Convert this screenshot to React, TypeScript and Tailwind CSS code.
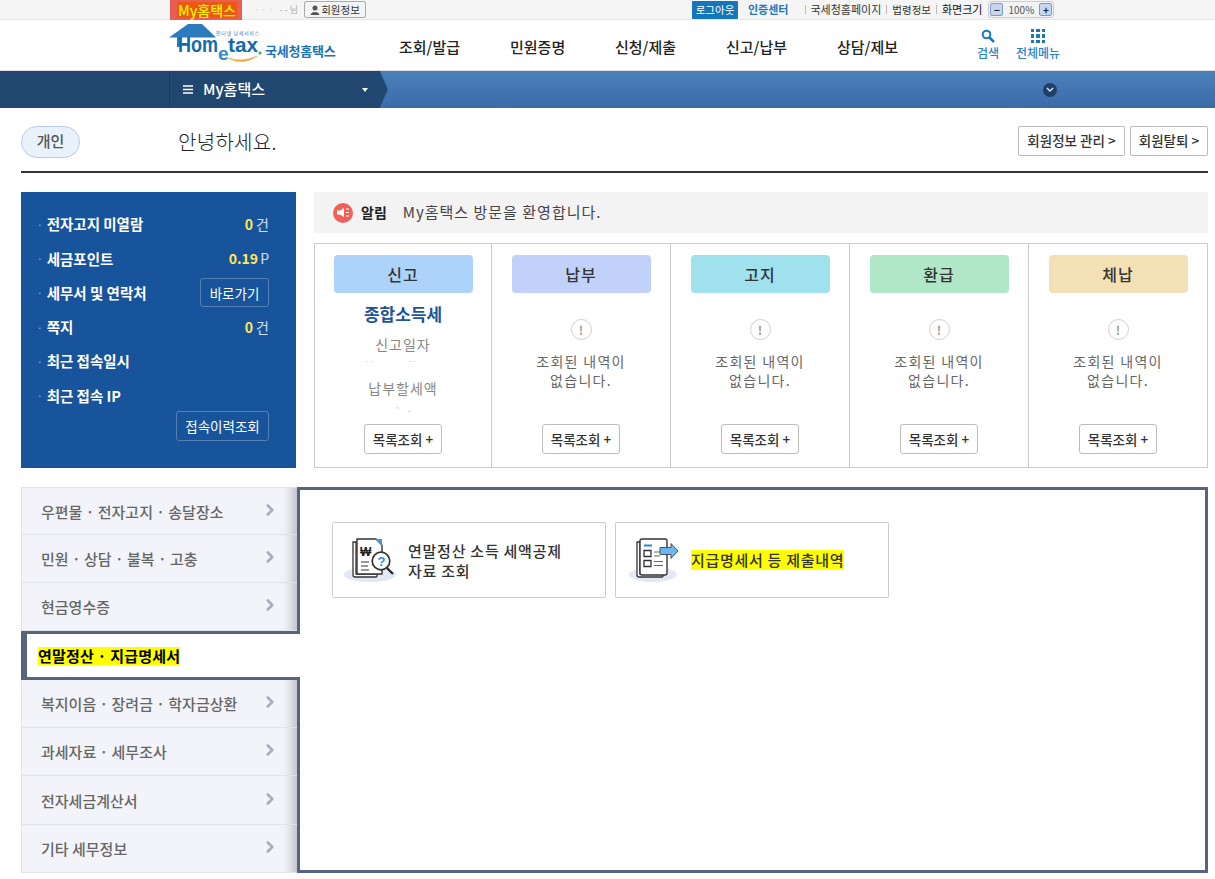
import React from "react";
import { ChevronRight } from "lucide-react";

const font = "font-['Noto_Sans_CJK_KR','Noto_Sans',sans-serif]";

function Sep() {
  return <span className="mx-[5px] inline-block h-[9px] w-px bg-[#bbbbbb]" />;
}

function Logo() {
  return (
    <svg width="100" height="44" viewBox="0 0 100 44" className="shrink-0">
      <path d="M0 14.500 L19 1 H33 L47 14.500 H22 H11 V24 H8 V14.500 Z" fill="#2b7bbd" />
      <text x="9" y="29" fontFamily="'Liberation Sans',sans-serif" fontWeight="700" fontSize="22" fill="#156aa9" textLength="40" lengthAdjust="spacingAndGlyphs">Hom</text>
      <text x="49" y="37" fontFamily="'Liberation Sans',sans-serif" fontWeight="700" fontSize="19" fill="#2d8ccb">e</text>
      <text x="59" y="29" fontFamily="'Liberation Sans',sans-serif" fontWeight="700" fontSize="20" fill="#156aa9" textLength="30" lengthAdjust="spacingAndGlyphs">tax</text>
      <circle cx="91" cy="30" r="1.500" fill="#3fae49" />
      <path d="M59 35 Q74 43 88 33 Q74 40 59 35 Z" fill="#f2a83b" stroke="#f2a83b" strokeWidth="0.600" />
      <text x="47" y="12" fontFamily="'Noto Sans CJK KR',sans-serif" fontSize="5" fill="#2a7cc0" textLength="43">인터넷 납세서비스</text>
    </svg>
  );
}

function Card1Icon() {
  return (
    <svg width="54" height="48" viewBox="0 0 54 48" className="shrink-0">
      <ellipse cx="27" cy="38.500" rx="26.500" ry="7.500" fill="#e2e9f5" />
      <path d="M10 6 H13 V38 H34 V40 a1 1 0 0 1 -1 1 H12 a2 2 0 0 1 -2 -2 Z" fill="#fff" stroke="#333" strokeWidth="1.300" />
      <path d="M14 3 H33 L39 9 V38 H14 Z" fill="#fff" stroke="#333" strokeWidth="1.400" />
      <path d="M32 3 L39 10 V3 Z" fill="#4d93d6" />
      <text x="17" y="20" fontFamily="'Liberation Sans',sans-serif" fontWeight="700" fontSize="12" fill="#222">₩</text>
      <path d="M18 26 h8 M18 30 h7 M18 34 h8" stroke="#777" strokeWidth="1.300" />
      <circle cx="38" cy="25" r="8.800" fill="#fff" stroke="#333" strokeWidth="1.700" />
      <text x="34.500" y="30" fontFamily="'Liberation Sans',sans-serif" fontWeight="700" fontSize="13" fill="#2f8fe0">?</text>
      <path d="M44 32 L50 38" stroke="#222" strokeWidth="2.200" />
    </svg>
  );
}

function Card2Icon() {
  return (
    <svg width="54" height="48" viewBox="0 0 54 48" className="shrink-0">
      <ellipse cx="25" cy="38.500" rx="24" ry="7.500" fill="#e2e9f5" />
      <path d="M9 6 H12 V38 H35 V40 a1 1 0 0 1 -1 1 H11 a2 2 0 0 1 -2 -2 Z" fill="#fff" stroke="#333" strokeWidth="1.300" />
      <rect x="12" y="3" width="27" height="36" rx="2" fill="#fff" stroke="#333" strokeWidth="1.400" />
      <path d="M16 9.500 h8" stroke="#2d86c9" strokeWidth="2" />
      <path d="M16 14.500 h7 v6 h-7 Z M16 24.500 h7 v6 h-7 Z" fill="none" stroke="#333" strokeWidth="1.300" />
      <path d="M26 16 h6 M26 20 h6 M26 25.500 h9 M26 29.500 h9" stroke="#666" strokeWidth="1.200" />
      <path d="M32 11.500 h11 v-4 l7 7.500 -7 7.500 v-4 h-11 Z" fill="#6ab7f2" stroke="#333" strokeWidth="0.800" />
    </svg>
  );
}

function Column({ title, color, children }: { title: string; color: string; children?: React.ReactNode }) {
  return (
    <div className="flex h-full min-w-0 flex-col items-center border-l border-[#cccccc] first:border-l-0">
      <div className={`mt-[11px] flex h-[38px] w-[139px] items-center justify-center rounded-[4px] text-[16px] font-medium tracking-[1px] text-[#333333] ${color}`}>
        {title}
      </div>
      {children ?? (
        <>
          <div className="mt-[26px] flex h-[21px] w-[21px] items-center justify-center rounded-full border border-[#cfcfcf] text-[12px] font-bold leading-none text-[#999999]">!</div>
          <div className="mt-[12px] text-center text-[14px] leading-[19px] tracking-[1.300px] text-[#666666]">
            조회된 내역이
            <br />
            없습니다.
          </div>
        </>
      )}
      <button className="mb-[13px] mt-auto flex h-[30px] w-[78px] items-center justify-center rounded-[3px] border border-[#bbbbbb] bg-white text-[13.500px] font-medium text-[#333333]">
        목록조회 +
      </button>
    </div>
  );
}

function InfoRow({ label, children }: { label: string; children?: React.ReactNode }) {
  return (
    <div className="flex h-[34.300px] items-center justify-between">
      <div className="flex items-center text-[14.500px] font-semibold text-white">
        <span className="mr-[4px] text-[10px] font-normal text-[#9db9da]">·</span>
        {label}
      </div>
      {children}
    </div>
  );
}

const menu = [
  { t: "우편물 · 전자고지 · 송달장소", h: "h-[48px]" },
  { t: "민원 · 상담 · 불복 · 고충", h: "h-[48px]" },
  { t: "현금영수증", h: "h-[48px]" },
  { t: "연말정산 · 지급명세서", h: "h-[49px]" },
  { t: "복지이음 · 장려금 · 학자금상환", h: "h-[48px]" },
  { t: "과세자료 · 세무조사", h: "h-[48px]" },
  { t: "전자세금계산서", h: "h-[49px]" },
  { t: "기타 세무정보", h: "h-[48px]" },
];

export default function App() {
  return (
    <div className={`${font} h-[879px] w-[1215px] overflow-hidden bg-white text-[#333333]`}>
      {/* utility bar */}
      <div className="flex h-[20px] items-center border-b border-[#e6e6e6] bg-[#f5f5f5] pl-[170px] text-[11px] text-[#333333]">
        <div className="flex h-[21px] w-[72px] items-center justify-center bg-[#ea5d55] pl-[2px]">
          <span className="bg-[#e85a10] px-[1px] text-[14px] font-medium leading-[16px] text-[#ffee00]">My홈택스</span>
        </div>
        <span className="ml-[12px] flex w-[44px] items-center justify-between text-[9px] leading-none text-[#cfcfcf]">
          <span>· · ·</span>
          <span className="text-[#aaaaaa]">- - 님</span>
        </span>
        <button className="ml-[6px] flex h-[17px] w-[62px] items-center justify-center rounded-[2px] border border-[#aaaaaa] bg-[#f4f4f4] text-[10.500px] text-[#333333]">
          <svg width="10" height="10" viewBox="0 0 10 10" className="mr-[1px]">
            <circle cx="5" cy="3" r="2.500" fill="#555555" />
            <path d="M0.500 10 C1 6 9 6 9.500 10 Z" fill="#555555" />
          </svg>
          회원정보
        </button>
        <button className="ml-[326px] flex h-[18px] w-[46px] items-center justify-center rounded-[1px] bg-[#1277bb] text-[10.500px] text-white">로그아웃</button>
        <span className="ml-[10px] text-[11px] font-bold text-[#1b78bf]">인증센터</span>
        <span className="ml-[17px]"><span className="inline-block h-[9px] w-px bg-[#bbbbbb]" /></span>
        <span className="ml-[4px] text-[11px]">국세청홈페이지</span>
        <Sep />
        <span className="text-[10.500px]">법령정보</span>
        <Sep />
        <span className="text-[11px] text-[#111111]">화면크기</span>
        <div className="ml-[6px] flex h-[17px] w-[66px] items-center justify-between rounded-[3px] border border-[#c8ccd4] bg-[#f2f3f5] px-[1px] text-[10px] text-[#555555]">
          <span className="flex h-[13px] w-[13px] items-center justify-center rounded-[2px] border border-[#7f9ac0] bg-[#c7d7ee] text-[10px] font-bold leading-none text-[#223]">−</span>
          100%
          <span className="flex h-[13px] w-[13px] items-center justify-center rounded-[2px] border border-[#7f9ac0] bg-[#c7d7ee] text-[10px] font-bold leading-none text-[#223]">+</span>
        </div>
      </div>

      {/* header */}
      <div className="flex h-[51px] items-center border-b border-[#dddddd] pl-[169px]">
        <Logo />
        <span className="ml-[-4px] mt-[11px] w-[72px] whitespace-nowrap text-[13px] font-semibold tracking-[-0.200px] text-[#1b74b8]">국세청홈택스</span>
        <nav className="ml-[62px] mt-[4px] flex text-[15px] font-medium text-[#222222]">
          <a className="w-[111px]">조회/발급</a>
          <a className="w-[105px]">민원증명</a>
          <a className="w-[111px]">신청/제출</a>
          <a className="w-[111px]">신고/납부</a>
          <a className="w-[140px]">상담/제보</a>
        </nav>
        <div className="flex w-[22px] flex-col items-center whitespace-nowrap text-[12px] font-medium leading-[16px] text-[#2b83c6]">
          <svg width="14" height="14" viewBox="0 0 14 14" className="mb-[2px]" fill="none" stroke="#1b78bf" strokeWidth="2">
            <circle cx="5.500" cy="5.500" r="3.800" />
            <path d="M8.500 8.500 L13 13" strokeWidth="2.500" />
          </svg>
          검색
        </div>
        <div className="ml-[17px] flex w-[44px] flex-col items-center whitespace-nowrap text-[12px] font-medium leading-[16px] text-[#2b83c6]">
          <div className="mb-[2px] grid h-[14px] w-[14px] grid-cols-3 gap-[2px]">
            {Array.from({ length: 9 }).map((_, i) => (
              <span key={i} className="bg-[#1b78bf]" />
            ))}
          </div>
          전체메뉴
        </div>
      </div>

      {/* blue nav */}
      <div className="flex h-[37px] bg-gradient-to-b from-[#4d80bb] to-[#3b6ba8]">
        <div className="h-full w-[170px] border-r border-[#1a3c66] bg-[#21466f]" />
        <div className="relative flex h-full w-[210px] items-center bg-[#21466f] pl-[13px] text-[15px] font-medium text-white">
          <svg width="10" height="9" viewBox="0 0 10 9" className="mr-[10px]">
            <path d="M0 1 h10 M0 4.500 h10 M0 8 h10" stroke="#fff" strokeWidth="1.500" />
          </svg>
          <span className="w-[64px] whitespace-nowrap">My홈택스</span>
          <span className="ml-[95px] h-0 w-0 border-x-[3.500px] border-t-[4px] border-x-transparent border-t-white" />
          <svg width="10" height="37" viewBox="0 0 10 37" className="absolute left-full top-0">
            <path d="M0 0 L8 18.500 L0 37 Z" fill="#21466f" />
            <path d="M0 0 L8 18.500 L0 37" fill="none" stroke="#2f6aa8" />
          </svg>
        </div>
        <div className="ml-[663px] flex h-full items-center">
          <span className="flex h-[14px] w-[14px] items-center justify-center rounded-full bg-[#203f66]">
            <svg width="8" height="6" viewBox="0 0 8 6" fill="none" stroke="#dfe8f2" strokeWidth="1.400">
              <path d="M1 1 L4 4 L7 1" />
            </svg>
          </span>
        </div>
      </div>

      <div className="px-[21px] pr-[7px]">
        {/* greeting */}
        <div className="flex h-[65px] items-center border-b-2 border-[#333333] pt-[4px]">
          <span className="flex h-[32px] w-[59px] items-center justify-center rounded-full border border-[#b9cde4] bg-[#e9f2fb] text-[15px] font-medium text-[#555555]">개인</span>
          <span className="ml-[98px] text-[20px] font-light tracking-[0.300px] text-[#222222]">안녕하세요.</span>
          <button className="-mt-[2px] ml-auto flex h-[30px] w-[107px] items-center justify-center rounded-[2px] border border-[#bbbbbb] text-[13.500px] font-medium text-[#333333]">회원정보 관리 &gt;</button>
          <button className="-mt-[2px] ml-[5px] flex h-[30px] w-[78px] items-center justify-center rounded-[2px] border border-[#bbbbbb] text-[13.500px] font-medium text-[#333333]">회원탈퇴 &gt;</button>
        </div>

        {/* summary */}
        <div className="mt-[19px] flex h-[276px]">
          <div className="w-[275px] shrink-0 bg-[#17549c] pl-[16px] pr-[27px] pt-[15px]">
            <InfoRow label="전자고지 미열람">
              <span className="text-[14px] text-white/80"><b className="text-[#ffe65c]">0</b> 건</span>
            </InfoRow>
            <InfoRow label="세금포인트">
              <span className="text-[14px] text-white/80"><b className="text-[#ffe65c]">0.19</b><span className="ml-[2px]">P</span></span>
            </InfoRow>
            <InfoRow label="세무서 및 연락처">
              <button className="flex h-[29px] w-[69px] items-center justify-center rounded-[3px] border border-[#5580b5] text-[13.500px] text-white">바로가기</button>
            </InfoRow>
            <InfoRow label="쪽지">
              <span className="text-[14px] text-white/80"><b className="text-[#ffe65c]">0</b> 건</span>
            </InfoRow>
            <InfoRow label="최근 접속일시" />
            <InfoRow label="최근 접속 IP" />
            <div className="mt-[-2px] flex justify-end">
              <button className="flex h-[30px] w-[93px] items-center justify-center rounded-[3px] border border-[#5580b5] text-[13.500px] text-white">접속이력조회</button>
            </div>
          </div>

          <div className="ml-[18px] flex min-w-0 flex-1 flex-col">
            <div className="flex h-[41px] items-center bg-[#f3f3f3] pl-[19px] text-[15px]">
              <span className="flex h-[20px] w-[20px] items-center justify-center rounded-full bg-[#f2605a]">
                <svg width="13" height="11" viewBox="0 0 13 11" fill="#fff">
                  <path d="M0 3.500 h3 L7 1 V10 L3 7.500 H0 Z" />
                  <path d="M9 2 h3 M9 5.500 h3 M9 9 h3" stroke="#fff" strokeWidth="1.200" />
                </svg>
              </span>
              <b className="ml-[8px] text-[14px] font-bold text-[#222222]">알림</b>
              <span className="ml-[16px] tracking-[1px] text-[#444444]">My홈택스 방문을 환영합니다.</span>
            </div>
            <div className="mt-[10px] grid h-[225px] grid-cols-[176px_179px_179px_179px_1fr] border border-[#cccccc]">
              <Column title="신고" color="bg-[#aed3fa]">
                <div className="mt-[10px] text-[17px] font-semibold leading-[22px] text-[#1f5499]">종합소득세</div>
                <div className="mt-[9px] text-[14px] leading-[20px] tracking-[1px] text-[#888888]">신고일자</div>
                <div className="mt-[3px] h-[8px] w-[75px] text-[8px] leading-[8px] text-[#cccccc]">- - &nbsp; &nbsp; &nbsp; &nbsp; &nbsp; &nbsp; &nbsp; &nbsp; &nbsp; &nbsp;- -</div>
                <div className="mt-[13px] text-[14px] leading-[20px] tracking-[1px] text-[#888888]">납부할세액</div>
                <div className="mt-[9px] h-[8px] text-[8px] leading-[8px] text-[#aaaaaa]">` &nbsp; &nbsp;-</div>
              </Column>
              <Column title="납부" color="bg-[#c1d1f9]" />
              <Column title="고지" color="bg-[#a0e1ee]" />
              <Column title="환급" color="bg-[#b0e7c7]" />
              <Column title="체납" color="bg-[#f3e1b5]" />
            </div>
          </div>
        </div>

        {/* lower */}
        <div className="mt-[19px] flex h-[386px]">
          <div className="relative z-10 flex w-[276px] shrink-0 flex-col">
            {menu.map((m, i) =>
              i === 3 ? (
                <div key={m.t} className={`${m.h} -mr-[3px] flex items-center border-y-[3px] border-l-[6px] border-[#56647f] border-r-0 bg-white pl-[11px] pt-[1px] text-[15px] font-semibold tracking-[0.200px] text-black`}>
                  <span className="bg-[#ffff00] leading-[18px]">{m.t}</span>
                </div>
              ) : (
                <div
                  key={m.t}
                  className={`${m.h} flex items-center justify-between border-b border-l border-[#e2e3e8] bg-[#f3f4fa] pl-[19px] pr-[18px] text-[15px] font-medium text-[#666666] shadow-[inset_-14px_0_12px_-10px_rgba(0,0,0,0.25)] first:border-t`}
                >
                  <span className="pt-[2px]">{m.t}</span>
                  <ChevronRight size={18} strokeWidth={3.500} className="-mt-[3px] text-[#a8adbb]" />
                </div>
              ),
            )}
          </div>
          <div className="min-w-0 flex-1 border-[3px] border-[#56647f] pl-[32px] pt-[32px]">
            <div className="flex gap-[9px]">
              <div className="flex h-[76px] w-[274px] items-center rounded-[2px] border border-[#cccccc] pl-[10px] text-[15px] font-medium leading-[20px] tracking-[0.750px] text-[#333333]">
                <Card1Icon />
                <span className="ml-[11px] pt-[2px]">
                  연말정산 소득 세액공제
                  <br />
                  자료 조회
                </span>
              </div>
              <div className="flex h-[76px] w-[274px] items-center rounded-[2px] border border-[#cccccc] pl-[12px] text-[15px] font-medium tracking-[0.700px] text-[#333333]">
                <Card2Icon />
                <span className="ml-[9px] bg-[#ffff00] leading-[20px]">지급명세서 등 제출내역</span>
              </div>
            </div>
          </div>
        </div>
      </div>
    </div>
  );
}
